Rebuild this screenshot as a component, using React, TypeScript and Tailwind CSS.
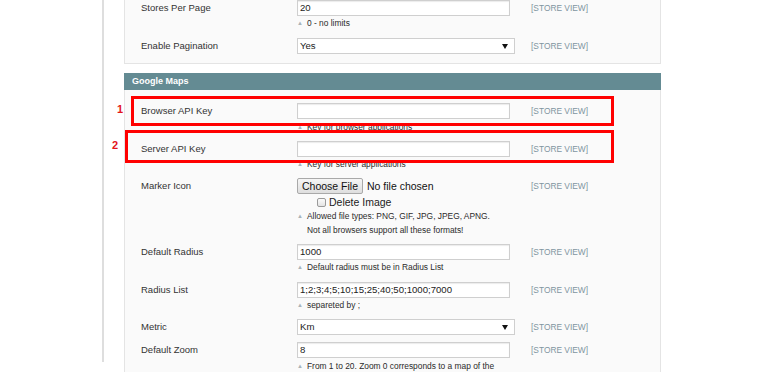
import React from "react";

const Hint = ({ children, arrow = true, className = "" }: { children: React.ReactNode; arrow?: boolean; className?: string }) => (
  <div className={`flex items-center text-[8.4px] leading-[10px] text-[#2b2b2b] ${className}`}>
    <span className="inline-block w-[10px] text-[6px] text-[#a9b3b8]">{arrow ? "▲" : ""}</span>
    {children}
  </div>
);

const TextInput = ({ value = "" }: { value?: string }) => (
  <div className="h-[16px] w-[213px] border border-[#cfcfcf] bg-white px-[2px] text-[9.6px] leading-[14px] text-[#222] shadow-[inset_0_1px_1px_rgba(0,0,0,0.08)]">
    {value}
  </div>
);

const SelectBox = ({ value }: { value: string }) => (
  <div className="relative h-[16px] w-[218px] border border-[#cfcfcf] bg-white px-[2px] text-[9.6px] leading-[14px] text-[#222]">
    {value}
    <svg className="absolute right-[6px] top-[5px]" width="6" height="5" viewBox="0 0 6 5">
      <path d="M0 0 H6 L3 5 Z" fill="#111" />
    </svg>
  </div>
);

const Row = ({
  label,
  h,
  children,
}: {
  label: string;
  h: string;
  children: React.ReactNode;
}) => (
  <div className={`flex items-start ${h}`}>
    <div className="w-[172px] pl-[16px] text-[9.5px] leading-[16px] text-[#333]">{label}</div>
    <div className="w-[234px]">{children}</div>
    <div className="text-[8.4px] leading-[16px] text-[#7f95a0]">[STORE VIEW]</div>
  </div>
);

export default function App() {
  return (
    <div className="h-[378px] w-[772px] overflow-hidden bg-white font-['Liberation_Sans',Arial,sans-serif]">
      <div className="ml-[102px] h-[372px] w-[560px] border-l-2 border-[#dedede] pl-[20px]">
        {/* previous fieldset */}
        <div className="-mt-[10px] h-[74px] w-[537px] border border-[#e4e4e4] bg-[#fafafa] pt-[9px]">
          <Row label="Stores Per Page" h="h-[38px]">
            <TextInput value="20" />
            <Hint className="mt-[2px]">0 - no limits</Hint>
          </Row>
          <Row label="Enable Pagination" h="h-[20px]">
            <SelectBox value="Yes" />
          </Row>
        </div>

        <div className="mt-[9px] h-[17px] w-[537px] bg-[#648b93] pl-[8px] text-[9px] font-bold leading-[17px] text-white">
          Google Maps
        </div>

        <div className="relative h-[282px] w-[537px] border-x border-[#e4e4e4] bg-[#fafafa] pt-[13px]">
          <Row label="Browser API Key" h="h-[38px]">
            <TextInput />
            <Hint className="mt-[3px]">Key for browser applications</Hint>
          </Row>
          <Row label="Server API Key" h="h-[37px]">
            <TextInput />
            <Hint className="mt-[2px]">Key for server applications</Hint>
          </Row>
          <Row label="Marker Icon" h="h-[66px]">
            <div className="flex items-center">
              <div className="h-[16px] w-[66px] rounded-[2px] border border-[#a9a9a9] bg-gradient-to-b from-[#f6f6f6] to-[#dedede] text-center text-[10.5px] leading-[14px] text-[#111]">
                Choose File
              </div>
              <span className="ml-[4px] text-[10.5px] leading-[14px] text-[#111]">No file chosen</span>
            </div>
            <div className="ml-[20px] mt-[2px] flex items-center text-[10.5px] leading-[12px] text-[#222]">
              <span className="mr-[3px] inline-block h-[9px] w-[9px] rounded-[2px] border border-[#9a9a9a] bg-gradient-to-b from-[#fbfbfb] to-[#e4e4e4]" />
              Delete Image
            </div>
            <Hint className="mt-[3px]">Allowed file types: PNG, GIF, JPG, JPEG, APNG.</Hint>
            <Hint className="mt-[4px]" arrow={false}>
              Not all browsers support all these formats!
            </Hint>
          </Row>
          <Row label="Default Radius" h="h-[38px]">
            <TextInput value="1000" />
            <Hint className="mt-[2px]">Default radius must be in Radius List</Hint>
          </Row>
          <Row label="Radius List" h="h-[37px]">
            <TextInput value="1;2;3;4;5;10;15;25;40;50;1000;7000" />
            <Hint className="mt-[2px]">separeted by ;</Hint>
          </Row>
          <Row label="Metric" h="h-[23px]">
            <SelectBox value="Km" />
          </Row>
          <Row label="Default Zoom" h="h-[30px]">
            <TextInput value="8" />
            <Hint className="mt-[3px]">From 1 to 20. Zoom 0 corresponds to a map of the</Hint>
          </Row>

          {/* annotation boxes */}
          <div className="absolute left-[6px] top-[6px] h-[30px] w-[483px] border-[3px] border-[#ff0000]" />
          <div className="absolute left-0 top-[40px] h-[33px] w-[489px] border-[3px] border-[#ff0000]" />
          <div className="absolute -left-[8px] top-[13px] text-[11px] font-bold leading-[12px] text-[#e3151a]">1</div>
          <div className="absolute -left-[13px] top-[49px] text-[11px] font-bold leading-[12px] text-[#e3151a]">2</div>
        </div>
      </div>
    </div>
  );
}
